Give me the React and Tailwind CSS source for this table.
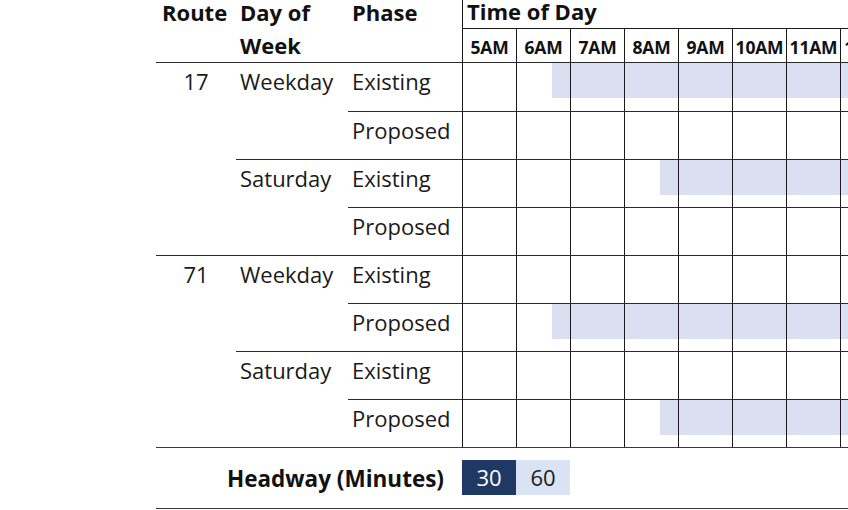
const hours = ["5AM", "6AM", "7AM", "8AM", "9AM", "10AM", "11AM", "12PM"];

const routes = [
  {
    id: "17",
    days: [
      { day: "Weekday", rows: [{ phase: "Existing", bar: 90 }, { phase: "Proposed" }] },
      { day: "Saturday", rows: [{ phase: "Existing", bar: 198 }, { phase: "Proposed" }] },
    ],
  },
  {
    id: "71",
    days: [
      { day: "Weekday", rows: [{ phase: "Existing" }, { phase: "Proposed", bar: 90 }] },
      { day: "Saturday", rows: [{ phase: "Existing" }, { phase: "Proposed", bar: 198 }] },
    ],
  },
];

// rows are 48px apart; a group border above the first row eats one pixel
const PhaseRow = ({ row, first, short }) => (
  <div
    className={`flex ${short ? "h-[47px]" : "h-[48px]"} ${first ? "" : "border-t border-[#2a2a2a]"}`}
  >
    <div className="w-[114px] pl-[4px] pt-[3px] text-[22px] leading-[30px] text-[#1a1a1a]">
      {row.phase}
    </div>
    <div className="relative flex">
      {row.bar !== undefined && (
        <div
          className="absolute top-0 right-0 h-[35px] bg-[#dae0f2]"
          style={{ left: row.bar }}
        />
      )}
      {hours.map((h) => (
        <div key={h} className="relative w-[54px] border-l border-[#1a1a1a]" />
      ))}
    </div>
  </div>
);

export default function App() {
  return (
    <div
      className="h-[510px] w-[848px] overflow-hidden bg-white pl-[156px] text-[#111]"
      style={{ fontFamily: '"Open Sans", "Noto Sans", sans-serif' }}
    >
      <div className="w-[738px]">
        {/* header */}
        <div className="flex h-[63px] border-b border-[#2a2a2a]">
          <div className="w-[80px] pl-[6px] text-[22px] font-bold leading-[24px]">Route</div>
          <div className="w-[112px] pl-[4px] text-[22px] font-bold leading-[24px]">
            <div>Day of</div>
            <div className="mt-[9px]">Week</div>
          </div>
          <div className="w-[114px] pl-[4px] text-[22px] font-bold leading-[24px]">Phase</div>
          <div className="flex flex-col border-l border-[#1a1a1a]">
            <div className="h-[29px] border-b border-[#1a1a1a] pl-[4px] text-[22px] font-bold leading-[22px]">
              Time of Day
            </div>
            <div className="flex">
              {hours.map((h, i) => (
                <div
                  key={h}
                  className={`h-[33px] text-center text-[17.5px] font-bold leading-[37px] tracking-[-0.2px] ${
                    i === 0 ? "w-[53px]" : "w-[54px] border-l border-[#1a1a1a]"
                  }`}
                >
                  {h}
                </div>
              ))}
            </div>
          </div>
        </div>

        {/* routes */}
        {routes.map((r, ri) => (
          <div key={r.id} className={`flex ${ri === 0 ? "" : "border-t border-[#2a2a2a]"}`}>
            <div className="w-[80px] pt-[3px] text-center text-[22px] leading-[30px] text-[#1a1a1a]">{r.id}</div>
            <div className="flex flex-col">
              {r.days.map((d, di) => (
                <div key={d.day} className={`flex ${di === 0 ? "" : "border-t border-[#2a2a2a]"}`}>
                  <div className="w-[112px] pl-[4px] pt-[3px] text-[22px] leading-[30px] text-[#1a1a1a]">
                    {d.day}
                  </div>
                  <div className="flex flex-col">
                    {d.rows.map((row, pi) => (
                      <PhaseRow
                        key={row.phase}
                        row={row}
                        first={pi === 0}
                        short={pi === 0 && (ri > 0 || di > 0)}
                      />
                    ))}
                  </div>
                </div>
              ))}
            </div>
          </div>
        ))}

        {/* headway legend */}
        <div className="flex h-[62px] items-start border-y border-[#3a3a3a]">
          <div className="mt-[14px] w-[306px] pr-[18px] text-right text-[22.5px] font-bold leading-[33px]">
            Headway (Minutes)
          </div>
          <div className="mt-[12px] flex">
            <div className="h-[35px] w-[54px] bg-[#1f3864] text-center text-[22px] leading-[35px] text-white">30</div>
            <div className="h-[35px] w-[54px] bg-[#dae3f3] text-center text-[22px] leading-[35px] text-[#1a1a1a]">60</div>
          </div>
        </div>
      </div>
    </div>
  );
}
